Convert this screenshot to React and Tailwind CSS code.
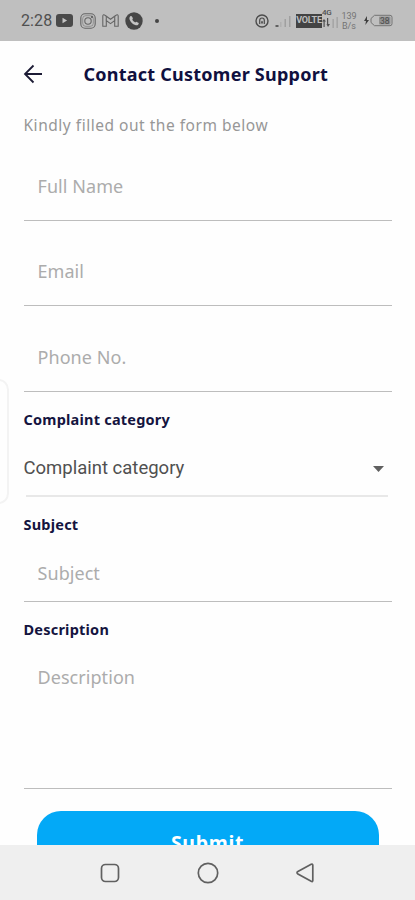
import React from "react";
import { useState } from "react";

const fieldClass =
  "block w-full border-b border-[#bdbdbd] bg-transparent px-3.5 font-['Noto_Sans'] text-[18px] tracking-[0.06px] text-gray-700 outline-none placeholder:text-[#acacac]";

const SignalBars = () => (
  <svg width="17" height="16" viewBox="0 0 17 16" fill="#a0a0a0">
    <rect x="0.5" y="12" width="3" height="2" fill="#606060" />
    <rect x="5" y="9" width="1.5" height="5" fill="#b0b0b0" />
    <rect x="9.5" y="6" width="1.5" height="8" />
    <rect x="14" y="3" width="1.5" height="11" />
  </svg>
);

const StatusBar = () => (
  <div className="flex h-[41px] shrink-0 items-center bg-[#bfbfbf] pl-[21px] font-['Roboto'] text-[#505050]">
    <span className="w-[35px] text-base leading-none tracking-[0.1px]">2:28</span>

    {/* YouTube */}
    <svg width="17" height="13" viewBox="0 0 17 13">
      <rect width="17" height="13" rx="3" fill="#4a4a4a" />
      <path d="M6.5 3.8v5.4l4.6-2.7z" fill="#c4c4c4" />
    </svg>

    {/* Instagram */}
    <svg className="ml-[7px]" width="16" height="16" viewBox="0 0 16 16" fill="none" stroke="#666" strokeWidth="1.1">
      <rect x="0.8" y="0.8" width="14.4" height="14.4" rx="4.2" />
      <rect x="2.7" y="2.7" width="10.6" height="10.6" rx="3" strokeWidth="0.5" />
      <circle cx="8" cy="8" r="3.2" />
      <circle cx="12" cy="4" r="0.6" fill="#666" />
    </svg>

    {/* Gmail */}
    <svg className="ml-[6px]" width="17" height="13" viewBox="0 0 17 13" fill="none" stroke="#666" strokeWidth="1.1">
      <path d="M0.8 12.2V2.1C0.8 0.7 2 0.4 3 1.2L8.5 5.3 14 1.2c1-.8 2.2-.5 2.2.9v10.1h-3.5V6.5L8.5 9.6 4.3 6.5v5.7z" />
      <path d="M4.3 6.5V2.2M12.7 6.5V2.2" />
    </svg>

    {/* Phone */}
    <svg className="ml-[6px]" width="18" height="18" viewBox="0 0 18 18">
      <circle cx="9" cy="9" r="8.7" fill="#464646" />
      <path
        d="M5.3 4.3c.6-.6 1.3-.5 1.6.1l.9 1.7c.2.4 0 .8-.5 1.4.6 1.3 1.6 2.3 2.9 2.9.7-.5 1.1-.7 1.5-.5l1.6.9c.6.4.6 1.1 0 1.7-.8.9-1.9 1.1-3.1.6-2.600-1-4.500-2.900-5.500-5.400-.5-1.300-.3-2.500.6-3.400z"
        fill="#c4c4c4"
      />
    </svg>
    <span className="ml-[12px] h-1 w-1 rounded-full bg-[#454545]" />

    {/* Hotspot */}
    <svg className="ml-[96px]" width="14" height="14" viewBox="0 0 14 14" fill="none" stroke="#4c4c4c" strokeWidth="1.4">
      <circle cx="7" cy="7" r="6" />
      <path d="M4.7 10V6.3a2.300 2.300 0 0 1 4.600 0V10" strokeWidth="1.2" />
      <path d="M7 7.200v2.300" strokeWidth="1.700" />
    </svg>
    <div className="ml-[6px]">
      <SignalBars />
    </div>
    <span className="ml-[4px] flex h-[14px] w-[26px] items-center justify-center bg-[#434343] text-[9px] font-bold tracking-[-0.2px] text-[#bfbfbf]">
      VOLTE
    </span>
    <div className="flex w-[17px] flex-col pb-[4px]">
      <span className="text-[8px] font-medium leading-[8px] tracking-[-0.4px]">4G</span>
      <svg width="17" height="11" viewBox="0 0 17 11" fill="#a0a0a0">
        <path d="M0 4.500 2 2l2 2.500H2.700V10H1.500V4.500zM5 1h1.200v6L8 7 6 10 4.500 7H5z" fill="#505050" />
        <rect x="10.500" y="2" width="1.300" height="9" />
        <rect x="14.500" y="0" width="1.300" height="11" />
      </svg>
    </div>
    <div className="ml-[2px] flex w-[16px] flex-col items-center text-[9px] leading-[10px] text-[#747474]">
      <span>139</span>
      <span>B/s</span>
    </div>

    {/* Charging battery */}
    <svg className="ml-[6px]" width="31" height="13" viewBox="0 0 31 13">
      <path d="M4 2 1 7h2l-.7 4L6 6H4z" fill="#3f3f3f" />
      <path d="M11.500 1.300H27a2 2 0 0 1 2 2v6.400a2 2 0 0 1-2 2H11.500L8 8.500v-4z" fill="none" stroke="#747474" />
      <rect x="16" y="2.500" width="11.500" height="8" rx="1" fill="#929292" />
      <text x="17" y="9.500" fontSize="8.500" fill="#4c4c4c">38</text>
    </svg>
  </div>
);

const Header = () => (
  <div className="flex h-[66px] items-center pl-[23px]">
    <button aria-label="Back" className="w-[60.5px]">
      <svg width="20" height="20" viewBox="0 0 20 20" fill="none" stroke="#1c1b35" strokeWidth="1.8">
        <path d="M19 10H2M10.500 1.500 2 10l8.500 8.500" />
      </svg>
    </button>
    <h1 className="font-['Noto_Sans'] text-[18px] font-bold tracking-[0.24px] text-[#10103f]">
      Contact Customer Support
    </h1>
  </div>
);

const Label = ({ children }) => (
  <label className="block h-[20px] font-['Noto_Sans'] text-[14.5px] font-bold leading-[21px] tracking-[0.22px] text-[#14143f]">
    {children}
  </label>
);

const NavBar = () => (
  <div className="relative flex h-[55px] shrink-0 items-center justify-center gap-[77px] bg-[#efefef]">
    <svg width="20" height="20" viewBox="0 0 20 20" fill="none" stroke="#606060" strokeWidth="1.7">
      <rect x="1.5" y="1.5" width="17" height="17" rx="4" />
    </svg>
    <svg width="22" height="22" viewBox="0 0 22 22" fill="none" stroke="#606060" strokeWidth="1.7">
      <circle cx="11" cy="11" r="9.7" />
    </svg>
    <svg width="20" height="20" viewBox="0 0 20 20" fill="none" stroke="#606060" strokeWidth="1.7" strokeLinejoin="round">
      <path d="M15.200 1.300 1.900 8.500c-1.200.7-1.200 1.700 0 2.400l13.300 7.400c1 .5 1.600.2 1.600-.9V2.200c0-1.100-.6-1.400-1.600-.9z" />
    </svg>
  </div>
);

export default function App() {
  const [category] = useState("Complaint category");

  return (
    <div className="relative flex h-[900px] w-full flex-col overflow-hidden bg-[#fefefe] font-['Noto_Sans',sans-serif]">
      <StatusBar />

      <main className="min-h-0 flex-1 overflow-hidden">
        <Header />
        <form className="px-[23.5px]" onSubmit={(e) => e.preventDefault()}>
          <p className="h-[44px] pt-[7px] text-[15.5px] leading-[22px] tracking-[0.52px] text-[#979797]">
            Kindly filled out the form below
          </p>
          <input className={`${fieldClass} h-[70px]`} placeholder="Full Name" />
          <input className={`${fieldClass} mt-[15px] h-[70px]`} placeholder="Email" type="email" />
          <input className={`${fieldClass} mt-[15px] h-[71px] pt-px`} placeholder="Phone No." />

          <div className="mt-[17px]">
            <Label>Complaint category</Label>
            <button
              type="button"
              className="ml-[2px] flex h-[68px] w-[362px] items-center justify-between border-b-2 border-[#e8e8e8] pr-[4px] pt-[14px]"
            >
              <span className="-ml-[2px] font-['Roboto'] text-[18.5px] text-[#505050]">{category}</span>
              <svg width="11" height="6" viewBox="0 0 11 6" fill="#606060">
                <path d="M0 0h11L5.5 6z" />
              </svg>
            </button>
          </div>

          <div className="mt-[17px]">
            <Label>Subject</Label>
            <input className={`${fieldClass} h-[68px] pt-[11px]`} placeholder="Subject" />
          </div>

          <div className="mt-[17px]">
            <Label>Description</Label>
            <textarea className={`${fieldClass} h-[150px] resize-none pt-[25px]`} placeholder="Description" />
          </div>

          <button
            type="submit"
            className="mx-auto mt-[22px] flex h-[63px] w-[342px] items-center justify-center rounded-[24px] bg-[#03a9f7] text-[19.5px] font-bold tracking-[0.7px] text-white"
          >
            Submit
          </button>
        </form>
      </main>

      <NavBar />

      {/* Edge panel handle */}
      <div className="absolute -left-3 top-[379px] h-[125px] w-[21px] rounded-[12px] border-2 border-[#f3f3f3]" />
    </div>
  );
}
